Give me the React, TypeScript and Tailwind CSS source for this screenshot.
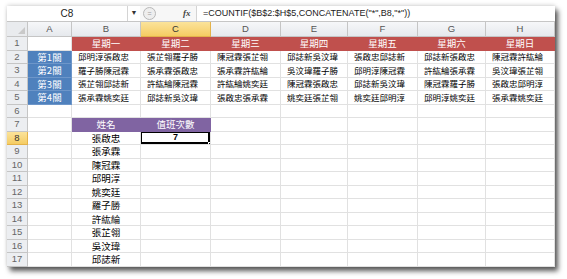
import React from 'react';

const cols = ['A', 'B', 'C', 'D', 'E', 'F', 'G', 'H'];
const days = ['星期一', '星期二', '星期三', '星期四', '星期五', '星期六', '星期日'];

const roster = [
  ['邱明淳張啟忠', '張芷翎羅子勝', '陳冠霖張芷翎', '邱誌新吳汶瑋', '張啟忠邱誌新', '邱誌新張啟忠', '陳冠霖許紘綸'],
  ['羅子勝陳冠霖', '張承霖張啟忠', '張承霖許紘綸', '吳汶瑋羅子勝', '邱明淳陳冠霖', '許紘綸張承霖', '吳汶瑋張芷翎'],
  ['張芷翎邱誌新', '許紘綸陳冠霖', '許紘綸姚奕廷', '陳冠霖張啟忠', '邱誌新吳汶瑋', '陳冠霖羅子勝', '張啟忠邱明淳'],
  ['張承霖姚奕廷', '邱誌新吳汶瑋', '張啟忠張承霖', '姚奕廷張芷翎', '姚奕廷邱明淳', '邱明淳姚奕廷', '張承霖姚奕廷'],
];

const names = ['張啟忠', '張承霖', '陳冠霖', '邱明淳', '姚奕廷', '羅子勝', '許紘綸', '張芷翎', '吳汶瑋', '邱誌新'];

const cjk = "font-['Noto_Sans_CJK_TC','Noto_Sans_CJK_SC',sans-serif]";
const latin = "font-['Liberation_Sans',Arial,sans-serif]";

function Cell({ r, c }: { r: number; c: number }) {
  const base = 'flex items-center overflow-hidden whitespace-nowrap border-r border-b';

  // row 1: weekday headers
  if (r === 1) {
    if (c === 0) return <div className={`${base} border-[#e1e1e1] bg-white`} />;
    return (
      <div className={`${base} ${cjk} justify-center border-[#c0504d] bg-[#c0504d] text-[9.5px] text-white`}>
        {days[c - 1]}
      </div>
    );
  }

  // rows 2-5: shifts
  if (r >= 2 && r <= 5) {
    if (c === 0)
      return (
        <div className={`${base} ${cjk} justify-center border-[#6d96c9] bg-[#4f81bd] text-[9.5px] text-white`}>
          第{r - 1}關
        </div>
      );
    return (
      <div className={`${base} ${cjk} border-[#e1e1e1] bg-white pl-[6px] text-[8.5px] text-black`}>
        {roster[r - 2][c - 1]}
      </div>
    );
  }

  // row 7: lookup table header
  if (r === 7 && (c === 1 || c === 2)) {
    return (
      <div className={`${base} ${cjk} justify-center border-[#8064a2] bg-[#8064a2] text-[9.5px] text-white`}>
        {c === 1 ? '姓名' : '值班次數'}
      </div>
    );
  }

  if (r >= 8 && c === 1) {
    return (
      <div className={`${base} ${cjk} justify-center border-[#e1e1e1] bg-white text-[9.5px] text-black`}>
        {names[r - 8]}
      </div>
    );
  }

  // active cell C8
  if (r === 8 && c === 2) {
    return (
      <div className={`${base} ${latin} relative justify-center border-[#e1e1e1] bg-white text-[9px] font-bold text-black`}>
        7
        <div className="absolute -left-px -top-px bottom-0 right-0 border-2 border-black" />
        <div className="absolute -bottom-[2px] -right-[2px] h-[4px] w-[4px] border border-white bg-black" />
      </div>
    );
  }

  return <div className={`${base} border-[#e1e1e1] bg-white`} />;
}

export default function App() {
  const rows = Array.from({ length: 17 }, (_, i) => i + 1);

  return (
    <div className="h-[279px] w-[567px] overflow-hidden bg-white pl-[7px] pt-[6px]">
      <div className="flex h-[261px] w-[548px] flex-col overflow-hidden bg-white shadow-[3px_4px_5px_rgba(0,0,0,0.65),0_-1px_4px_rgba(0,0,0,0.15)]">
        {/* formula bar */}
        <div className={`flex h-[16px] shrink-0 items-center border-b border-[#c6c6c6] bg-white ${latin} text-[9px] text-[#222]`}>
          <div className="flex h-full w-[121px] items-center justify-center border-r border-[#d4d4d4] text-[10px]">C8</div>
          <div className="flex h-full w-[12px] items-center justify-center text-[7px] text-[#333]">▼</div>
          <div className="flex h-full w-[56px] items-center bg-[#f7f7f7]">
            <div className="ml-[3px] flex h-[13px] w-[13px] items-center justify-center rounded-full border border-[#b8b8b8] bg-[#eeeeee] text-[7px] leading-none text-[#999]">
              =
            </div>
            <span className="ml-[27px] font-['Liberation_Serif',serif] text-[9px] font-bold italic text-[#444]">fx</span>
          </div>
          <div className="flex h-full flex-1 items-center border-l border-[#d4d4d4] pl-[6px]">
            =COUNTIF($B$2:$H$5,CONCATENATE("*",B8,"*"))
          </div>
        </div>

        {/* sheet */}
        <div className="grid grid-cols-[21px_44px_69px_70px_70px_67px_70px_68px_69px] grid-rows-[15px_repeat(17,13.5px)]">
          {/* corner */}
          <div className="relative border-r border-b border-[#c5c5c5] bg-[#e9ebee]">
            <div className="absolute bottom-[2px] right-[2px] h-0 w-0 border-b-[7px] border-l-[7px] border-b-[#c9c9c9] border-l-transparent" />
          </div>
          {cols.map((col, i) => (
            <div
              key={col}
              className={`flex items-center justify-center border-r border-b ${latin} text-[9.5px] ${
                i === 2
                  ? 'border-[#e3b24a] bg-gradient-to-b from-[#fbe39a] to-[#f5cc62] text-[#333]'
                  : 'border-[#c5c5c5] bg-gradient-to-b from-[#f6f7f9] to-[#e6e9ed] text-[#555]'
              }`}
            >
              {col}
            </div>
          ))}

          {rows.map((r) => (
            <React.Fragment key={r}>
              <div
                className={`flex items-center justify-center border-r border-b ${latin} text-[9.5px] ${
                  r === 8
                    ? 'border-[#e3b24a] bg-gradient-to-b from-[#fbe39a] to-[#f5cc62] text-[#333]'
                    : 'border-[#c5c5c5] bg-[#eceef1] text-[#666]'
                }`}
              >
                {r}
              </div>
              {cols.map((_, c) => (
                <Cell key={c} r={r} c={c} />
              ))}
            </React.Fragment>
          ))}
        </div>
      </div>
    </div>
  );
}
